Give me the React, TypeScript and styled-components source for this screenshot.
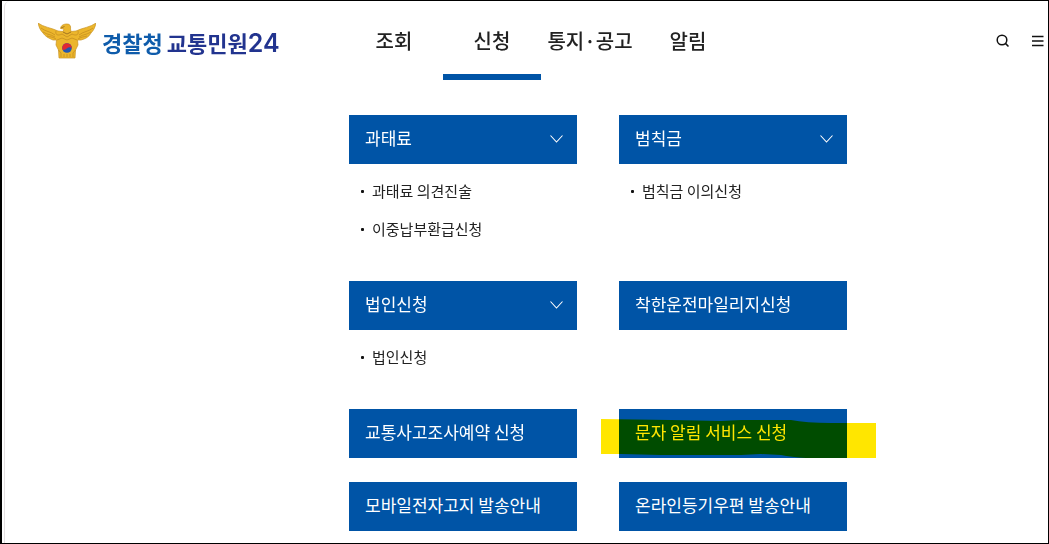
import React from 'react';
import styled, { createGlobalStyle } from 'styled-components';

const BLUE = '#0054a6';

const GlobalStyle = createGlobalStyle`
  *, *::before, *::after { box-sizing: border-box; }
  body {
    margin: 0;
    background: #fff;
    color: #222;
    font-family: "Noto Sans CJK KR", "Noto Sans", sans-serif;
  }
  a { color: inherit; text-decoration: none; }
  ul { list-style: none; margin: 0; padding: 0; }
`;

const Frame = styled.div`
  min-height: 100vh;
  border: 1px solid #000;
  border-left-width: 2px;
  padding-left: 2px;
  background: #fff;
`;

const Sheet = styled.div`
  border-left: 1px solid #e4e0e2;
  border-top-left-radius: 6px;
  padding-bottom: 12px;
`;

const Header = styled.header`
  display: flex;
  align-items: stretch;
  height: 79px;
`;

const Brand = styled.a`
  flex: 0 0 340px;
  display: flex;
  align-items: center;
  gap: 6px;
  padding-left: 33px;
`;

const BrandName = styled.span`
  display: flex;
  align-items: baseline;
  gap: 4px;
  padding-top: 4px;
  font-size: 22px;
  line-height: 32px;
  font-weight: 700;
  white-space: nowrap;
  color: #0f5cab;
`;

const BrandService = styled.span`
  color: #22348f;
`;

const BrandNumber = styled.span`
  font-family: Inter, sans-serif;
  font-size: 25px;
  font-weight: 600;
`;

const Nav = styled.nav`
  display: flex;
`;

const NavLink = styled.a<{ $active?: boolean }>`
  width: 98px;
  display: flex;
  align-items: center;
  justify-content: center;
  padding-top: 6px;
  border-bottom: 6px solid ${(p) => (p.$active ? BLUE : 'transparent')};
  font-size: 20px;
  line-height: 28px;
  font-weight: 500;
  white-space: nowrap;
`;

const Tools = styled.div`
  margin-left: auto;
  display: flex;
  align-items: center;
  gap: 22px;
  padding-right: 4px;
`;

const ToolButton = styled.button`
  display: flex;
  padding: 0;
  border: 0;
  background: none;
  color: #111;
  cursor: pointer;
`;

const Menu = styled.main`
  display: grid;
  grid-template-columns: 1fr 1fr;
  gap: 24px 42px;
  max-width: 498px;
  margin: 35px 0 0 344px;
`;

const Group = styled.section`
  position: relative;
`;

const GroupLink = styled.a`
  display: flex;
  align-items: center;
  justify-content: space-between;
  height: 49px;
  padding: 0 14px 3px 16px;
  background: ${BLUE};
  color: #fff;
  font-size: 17px;
  line-height: 24px;
  font-weight: 400;
  white-space: nowrap;
`;

const GroupToggle = styled(GroupLink).attrs({ as: 'button' })`
  width: 100%;
  border: 0;
  font-family: inherit;
  cursor: pointer;
`;

const SubList = styled.ul`
  padding: 9px 0 8px 12px;
`;

const SubItem = styled.li`
  display: flex;
  align-items: center;
  gap: 8px;
  height: 38px;
  padding-bottom: 2px;
  font-size: 15px;
  line-height: 22px;
  white-space: nowrap;

  &::before {
    content: '';
    width: 3px;
    height: 3px;
    border-radius: 1px;
    background: #111;
  }
`;

const Marker = styled.svg`
  position: absolute;
  left: -18px;
  top: 10px;
  width: 275px;
  height: 39px;
  mix-blend-mode: multiply;
  pointer-events: none;
`;

const Emblem = () => (
  <svg width="58" height="36" viewBox="0 0 58 36" aria-hidden="true">
    <path
      d="M0 0 C5 4 14 5 20 8 L25 8.500 L26 6 L22.500 5.500 C23 2 26 1 29 1 C32 1 33 3 32.500 6 L33 8.500 L38 8 C44 5 53 4 58 0 C57 5 55 8 53 10 C51 14 47 16 43 17 L39.500 17 L40 22 L37.500 27 L37 35 L21 35 L20.500 27 L18 22 L18.500 17 L15 17 C10 15 7 13 5 10 C2 7 1 4 0 0 Z"
      fill="#ecb62c"
      stroke="#c99324"
      strokeWidth="0.700"
      strokeLinejoin="round"
    />
    <g fill="none" stroke="#c08a20" strokeWidth="0.700">
      <path d="M3 5 C8 9 12 8 17 12 M5 9 C10 12 12 11 17 14 M9 13 C13 14 15 14 18 16" />
      <path d="M55 5 C50 9 46 8 41 12 M53 9 C48 12 46 11 41 14 M49 13 C45 14 43 14 40 16" />
      <path d="M18 8 C17 12 20 13 24 11 L29 14 L34 11 C38 13 41 12 40 8" />
      <path d="M19 17 L24 15 L29 17 L34 15 L39 17 M20.500 27 L23 30 L23 34 M37.500 27 L35 30 L35 34 M26 31 V34 M29 31 V34 M32 31 V34" />
    </g>
    <path d="M23 5 L26.500 3.500 M25 9 L29 11 L33 9" fill="none" stroke="#8f6520" strokeWidth="0.800" />
    <circle cx="29" cy="25" r="4.800" fill="#2458ae" />
    <path d="M24.400 26.500 A4.800 4.800 0 1 1 33.700 25.800 C32.500 23.500 30.500 24 29 25.200 C27.500 26.500 25.500 27.500 24.400 26.500 Z" fill="#e12832" />
  </svg>
);

const SearchIcon = () => (
  <svg width="14" height="14" viewBox="0 0 14 14" fill="none" stroke="currentColor" strokeWidth="1.500" aria-hidden="true">
    <circle cx="6" cy="6" r="4.800" />
    <path d="M9.400 9.400 L12.500 12.500" />
  </svg>
);

const MenuIcon = () => (
  <svg width="12" height="12" viewBox="0 0 12 12" fill="none" stroke="currentColor" strokeWidth="1.500" aria-hidden="true">
    <path d="M0 1.500 H11.500 M0 6 H11.500 M0 10.500 H11.500" />
  </svg>
);

const Chevron = () => (
  <svg width="13" height="10" viewBox="0 0 13 10" fill="none" stroke="currentColor" strokeWidth="1.100" aria-hidden="true">
    <path d="M0.500 2.500 L6.500 9 L12.500 2.500" />
  </svg>
);

const navItems = ['조회', '신청', '통지·공고', '알림'];

interface MenuGroup {
  title: string;
  children?: string[];
  marked?: boolean;
}

const groups: MenuGroup[] = [
  { title: '과태료', children: ['과태료 의견진술', '이중납부환급신청'] },
  { title: '범칙금', children: ['범칙금 이의신청'] },
  { title: '법인신청', children: ['법인신청'] },
  { title: '착한운전마일리지신청' },
  { title: '교통사고조사예약 신청' },
  { title: '문자 알림 서비스 신청', marked: true },
  { title: '모바일전자고지 발송안내' },
  { title: '온라인등기우편 발송안내' },
];

export default function App() {
  return (
    <Frame>
      <GlobalStyle />
      <Sheet>
        <Header>
          <Brand href="#">
            <Emblem />
            <BrandName>
              <span>경찰청</span>
              <BrandService>
                교통민원<BrandNumber>24</BrandNumber>
              </BrandService>
            </BrandName>
          </Brand>
          <Nav>
            {navItems.map((item) => (
              <NavLink key={item} href="#" $active={item === '신청'}>
                {item}
              </NavLink>
            ))}
          </Nav>
          <Tools>
            <ToolButton type="button" aria-label="검색">
              <SearchIcon />
            </ToolButton>
            <ToolButton type="button" aria-label="전체 메뉴">
              <MenuIcon />
            </ToolButton>
          </Tools>
        </Header>
        <Menu>
          {groups.map((group) => (
            <Group key={group.title}>
              {group.children ? (
                <>
                  <GroupToggle>
                    {group.title}
                    <Chevron />
                  </GroupToggle>
                  <SubList>
                    {group.children.map((child) => (
                      <SubItem key={child}>
                        <a href="#">{child}</a>
                      </SubItem>
                    ))}
                  </SubList>
                </>
              ) : (
                <GroupLink href="#">{group.title}</GroupLink>
              )}
              {group.marked && (
                <Marker viewBox="0 0 275 39" aria-hidden="true">
                  <path
                    d="M0 0 L70 1 L120 2 L140 1 H190 Q205 4 230 4 H275 V39 H205 Q190 38 180 36 L160 35 L140 36 H60 L20 35 H0 Z"
                    fill="#ffe600"
                  />
                </Marker>
              )}
            </Group>
          ))}
        </Menu>
      </Sheet>
    </Frame>
  );
}
